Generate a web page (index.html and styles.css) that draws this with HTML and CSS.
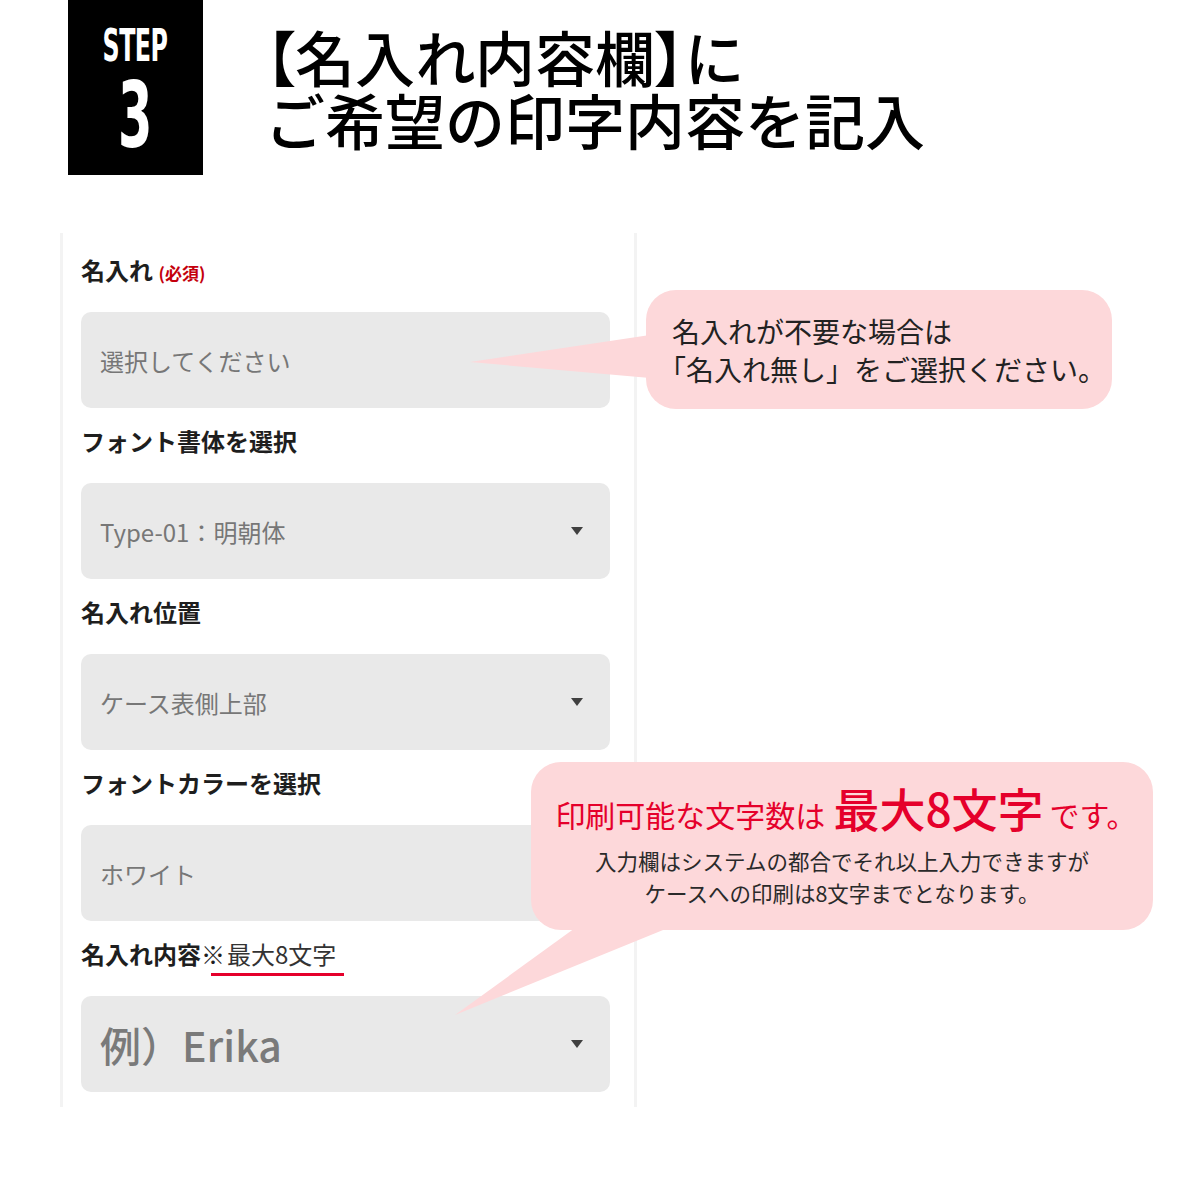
FILE: index.html
```html
<!DOCTYPE html>
<html lang="ja">
<head>
<meta charset="utf-8">
<link rel="stylesheet" href="styles.css">
</head>
<body>
<div class="page">
  <header class="header">
    <div class="step">
      <span class="step-word">STEP</span>
      <span class="step-num">3</span>
    </div>
    <h1 class="title">
      <span class="title-line palt">【名入れ内容欄】に</span>
      <span class="title-line">ご希望の印字内容を記入</span>
    </h1>
  </header>

  <section class="panel">
    <div class="field first">
      <div class="label">名入れ <span class="req">(必須)</span></div>
      <div class="select"><span>選択してください</span><i class="caret"></i></div>
    </div>
    <div class="field">
      <div class="label">フォント書体を選択</div>
      <div class="select"><span>Type-01：明朝体</span><i class="caret"></i></div>
    </div>
    <div class="field">
      <div class="label">名入れ位置</div>
      <div class="select"><span>ケース表側上部</span><i class="caret"></i></div>
    </div>
    <div class="field">
      <div class="label">フォントカラーを選択</div>
      <div class="select"><span>ホワイト</span><i class="caret"></i></div>
    </div>
    <div class="field">
      <div class="label">名入れ内容※<span class="max">最大8文字</span></div>
      <div class="select big"><span>例）Erika</span><i class="caret"></i></div>
    </div>
  </section>

  <div class="callout callout-1">
    <svg class="tail tail-1" width="190" height="100" viewBox="0 0 190 100"><polygon points="184,45 184,88 4,72" fill="#fdd8da"/></svg>
    <p class="c1-line">名入れが不要な場合は</p>
    <p class="c1-line shift">「名入れ無し」をご選択ください。</p>
  </div>

  <div class="callout callout-2">
    <svg class="tail tail-2" width="220" height="90" viewBox="0 0 220 90"><polygon points="120,0 213,0 0,87" fill="#fdd8da"/></svg>
    <p class="c2-red">印刷可能な文字数は<span class="c2-big">最大8文字</span>です。</p>
    <p class="c2-note">入力欄はシステムの都合でそれ以上入力できますが<br>ケースへの印刷は8文字までとなります。</p>
  </div>
</div>
</body>
</html>
```

FILE: styles.css
```css
* { box-sizing: border-box; }
html, body { margin: 0; padding: 0; background: #fff; }
body {
  font-family: "Noto Sans CJK JP", "Noto Sans", sans-serif;
  color: #222;
}
.page {
  position: relative;
  width: 1200px;
  height: 1200px;
  overflow: hidden;
}

/* header */
.header {
  display: flex;
  height: 175px;
}
.step {
  margin-left: 68px;
  width: 135px;
  height: 175px;
  background: #000;
  color: #fff;
  display: flex;
  flex-direction: column;
  align-items: center;
  font-family: "DejaVu Sans", sans-serif;
  font-weight: bold;
}
.step-word {
  display: block;
  font-size: 44px;
  line-height: 44px;
  margin-top: 24px;
  transform: scaleX(0.54);
  letter-spacing: -1px;
}
.step-num {
  display: block;
  font-size: 90px;
  line-height: 90px;
  margin-top: 3px;
  transform: scaleX(0.55);
}
.title {
  margin: 0 0 0 62px;
  padding-top: 24px;
  font-size: 60px;
  font-weight: 500;
  line-height: 63px;
  color: #000;
}
.title-line { display: block; }
.palt { font-feature-settings: "palt" 1; }

/* panel */
.panel {
  margin: 58px 0 0 60px;
  width: 577px;
  padding: 3px 24px 15px 18px;
  border-left: 3px solid #f3f3f3;
  border-right: 3px solid #f3f3f3;
  background: #fff;
}
.field { padding-top: 18px; }
.field.first { padding-top: 19px; }
.label {
  font-size: 24px;
  line-height: 30px;
  font-weight: bold;
  color: #1e1e1e;
  height: 30px;
  margin-bottom: 27px;
  white-space: nowrap;
}
.req {
  font-size: 17px;
  color: #c4000c;
  font-weight: bold;
}
.max {
  position: relative;
  font-weight: normal;
  color: #333;
  margin-left: 2px;
}
.max::after {
  content: "";
  position: absolute;
  left: -16px;
  right: -8px;
  bottom: -5px;
  height: 3px;
  background: #e5002b;
}
.select {
  height: 96px;
  border-radius: 10px;
  background: #e9e9e9;
  display: flex;
  align-items: center;
  justify-content: space-between;
  padding: 0 27px 0 19px;
  font-size: 24px;
  color: #777;
}
.select.big {
  font-size: 41px;
  font-weight: 500;
  color: #7a7a7a;
}
.caret {
  width: 0;
  height: 0;
  border-left: 6px solid transparent;
  border-right: 6px solid transparent;
  border-top: 8px solid #404040;
}

/* callouts */
.callout {
  position: absolute;
  background: #fdd8da;
  border-radius: 30px;
}
.callout p { margin: 0; position: relative; }
.tail { position: absolute; overflow: visible; }

.callout-1 {
  left: 646px;
  top: 290px;
  width: 466px;
  height: 119px;
  padding-left: 26px;
  display: flex;
  flex-direction: column;
  justify-content: center;
}
.tail-1 { left: -180px; top: 0; }
.c1-line {
  font-size: 28px;
  line-height: 38px;
  color: #222;
  white-space: nowrap;
}
.c1-line.shift { margin-left: -14px; }

.callout-2 {
  left: 531px;
  top: 762px;
  width: 622px;
  height: 168px;
  text-align: center;
  padding-top: 14px;
}
.tail-2 { left: -76px; top: 166px; }
.c2-red {
  color: #e5002b;
  font-size: 30px;
  line-height: 62px;
  white-space: nowrap;
  padding-left: 8px;
}
.c2-big {
  font-size: 46px;
  font-weight: 500;
  margin: 0 6px 0 8px;
}
.c2-note {
  font-size: 21.5px;
  line-height: 32px;
  color: #2a2a2a;
  white-space: nowrap;
}
```
